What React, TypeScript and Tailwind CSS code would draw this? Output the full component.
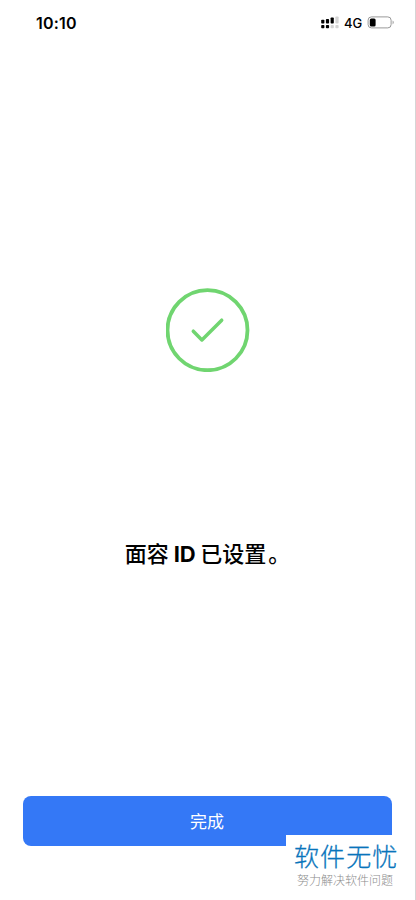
function StatusBar() {
  return (
    <header className="flex h-[46px] items-center justify-between pl-9 pr-5">
      <time className="font-['Inter','Liberation_Sans',sans-serif] text-[16px] font-semibold leading-5 tracking-[0.2px]">10:10</time>
      <div className="flex items-center">
        <svg className="h-[14px] w-[19px]" viewBox="0 0 19 14" fill="#000">
          <rect x="0.2" y="3.8" width="3.2" height="3.7" rx="0.8" />
          <rect x="4.9" y="3.1" width="3.2" height="4.4" rx="0.8" />
          <rect x="9.6" y="1.4" width="3.2" height="6.1" rx="0.8" />
          <rect x="14.4" y="0.4" width="3.2" height="7.1" rx="0.8" fill="#d4d4d4" />
          <rect x="0.2" y="9" width="3.2" height="3.2" rx="0.8" />
          <rect x="4.9" y="9" width="3.2" height="3.2" rx="0.8" />
          <rect x="9.6" y="9" width="3.2" height="3.2" rx="0.8" fill="#d4d4d4" />
          <rect x="14.4" y="9" width="3.2" height="3.2" rx="0.8" fill="#d4d4d4" />
        </svg>
        <span className="ml-1 w-[23px] whitespace-nowrap font-['Inter','Liberation_Sans',sans-serif] text-[13px] font-medium leading-5">4G</span>
        <svg className="h-[14px] w-7" viewBox="0 0 28 14" fill="none">
          <rect x="1.1" y="0.9" width="23" height="11" rx="3.3" stroke="#999" strokeWidth="1" />
          <rect x="2.8" y="2.4" width="5.8" height="8" rx="1.5" fill="#000" />
          <path d="M25.6 4.6c1.5.7 1.5 3.1 0 3.8z" fill="#999" />
        </svg>
      </div>
    </header>
  );
}

export default function App() {
  return (
    <div className="relative flex h-[900px] w-[416px] flex-col overflow-hidden border-r border-[#d5d5d5] bg-white font-['Noto_Sans_CJK_SC',sans-serif] text-black">
      <StatusBar />
      <main className="flex flex-1 flex-col items-center">
        <svg className="mt-[242px] h-[84px] w-[84px]" viewBox="0 0 84 84" fill="none" stroke="#70d570">
          <circle cx="41.5" cy="42.2" r="40" strokeWidth="3.8" />
          <path d="M27.3 43.2 35.9 52 55.7 32.2" strokeWidth="3.5" strokeLinecap="round" strokeLinejoin="round" />
        </svg>
        <h1 className="mt-[164px] flex h-8 items-center whitespace-pre text-[22px] font-medium leading-8">
          面容<span className="ml-[5px] mr-[5px] mt-[3px] font-['Inter','Liberation_Sans',sans-serif] font-bold tracking-[-0.4px]">ID</span>已设置<span className="pl-[2px]">。</span>
        </h1>
      </main>
      <button className="mb-[54px] ml-[23px] h-[50px] w-[369px] rounded-lg bg-[#3478f6] pr-px text-[17px] font-normal leading-6 text-white">完成</button>
      <aside className="absolute bottom-0 right-0 flex h-[65px] w-[129px] flex-col bg-white pl-2 pt-1">
        <div className="h-[33px] whitespace-nowrap text-[25px] font-light leading-[33px] tracking-[1.1px] text-[#0874bb] [-webkit-text-stroke:0.3px_#0874bb]">软件无忧</div>
        <div className="ml-[3px] h-4 whitespace-nowrap text-[12px] font-light leading-4 text-[#8c8c8c]">努力解决软件问题</div>
      </aside>
    </div>
  );
}
